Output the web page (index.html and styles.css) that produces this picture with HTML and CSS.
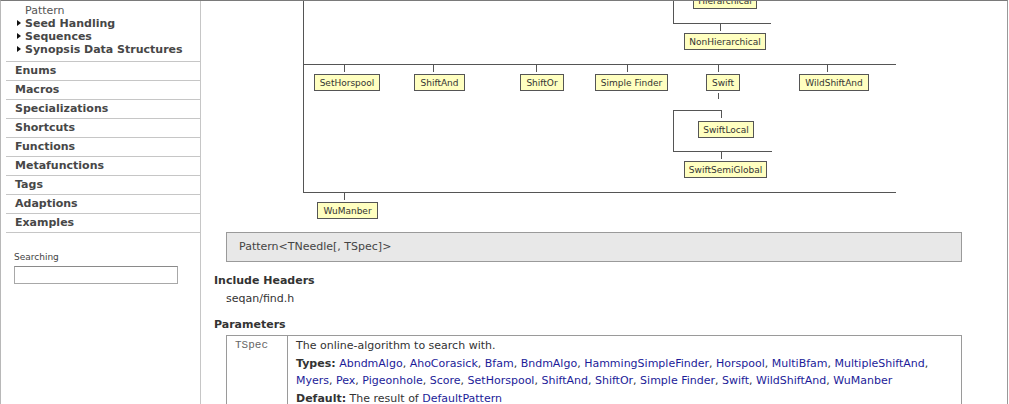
FILE: index.html
```html
<!DOCTYPE html>
<html lang="en">
<head>
<meta charset="utf-8">
<title>Pattern</title>
<link rel="stylesheet" href="styles.css">
</head>
<body>
<div class="page">
  <nav class="sidebar">
    <ul class="subnav">
      <li class="current">Pattern</li>
      <li class="folder">Seed Handling</li>
      <li class="folder">Sequences</li>
      <li class="folder">Synopsis Data Structures</li>
    </ul>
    <ul class="navlist">
      <li>Enums</li>
      <li>Macros</li>
      <li>Specializations</li>
      <li>Shortcuts</li>
      <li>Functions</li>
      <li>Metafunctions</li>
      <li>Tags</li>
      <li>Adaptions</li>
      <li>Examples</li>
    </ul>
    <div class="search">
      <label class="search-label" for="q">Searching</label>
      <input class="search-input" id="q" type="text">
    </div>
  </nav>
  <main class="main">
    <svg class="diagram" viewBox="201 1 806 222" width="806" height="222" xmlns="http://www.w3.org/2000/svg">
      <g class="edges">
        <path d="M303.5 0 V192.5"/>
        <path d="M303 64.5 H896"/>
        <path d="M303 192.5 H896"/>
        <path d="M344.5 64 V72 M433.5 64 V72 M536.5 64 V72 M627.5 64 V72 M718.5 64 V72 M827.5 64 V72"/>
        <path d="M673.5 0 V23.5 H771"/>
        <path d="M720.5 23 V31"/>
        <path d="M718.5 93 V99"/>
        <path d="M721.5 118 V110.5 H673.5 V151.5 H772"/>
        <path d="M721.5 151 V159"/>
        <path d="M344.5 192 V200"/>
      </g>
      <g class="nodes">
        <rect x="693.5" y="-7.5" width="63" height="16"/><text x="725" y="4">Hierarchical</text>
        <rect x="684.5" y="33.5" width="81" height="16"/><text x="725" y="45">NonHierarchical</text>
        <rect x="314.5" y="74.5" width="65" height="16"/><text x="347" y="86">SetHorspool</text>
        <rect x="414.5" y="74.5" width="50" height="16"/><text x="439.5" y="86">ShiftAnd</text>
        <rect x="520.5" y="74.5" width="43" height="16"/><text x="542" y="86">ShiftOr</text>
        <rect x="595.5" y="74.5" width="72" height="16"/><text x="631.5" y="86">Simple Finder</text>
        <rect x="706.5" y="74.5" width="33" height="16"/><text x="723" y="86">Swift</text>
        <rect x="799.5" y="74.5" width="69" height="16"/><text x="834" y="86">WildShiftAnd</text>
        <rect x="698.5" y="121.5" width="55" height="16"/><text x="726" y="133">SwiftLocal</text>
        <rect x="684.5" y="161.5" width="82" height="16"/><text x="725.5" y="173">SwiftSemiGlobal</text>
        <rect x="317.5" y="202.5" width="60" height="16"/><text x="347.5" y="214">WuManber</text>
      </g>
    </svg>

    <div class="signature">Pattern&lt;TNeedle[, TSpec]&gt;</div>

    <h3 class="section-title">Include Headers</h3>
    <div class="include">seqan/find.h</div>

    <h3 class="section-title section-params">Parameters</h3>
    <div class="params">
      <div class="param-name">TSpec</div>
      <div class="param-desc">
        <p>The online-algorithm to search with.</p>
        <p><b>Types:</b> <a href="#">AbndmAlgo</a>, <a href="#">AhoCorasick</a>, <a href="#">Bfam</a>, <a href="#">BndmAlgo</a>, <a href="#">HammingSimpleFinder</a>, <a href="#">Horspool</a>, <a href="#">MultiBfam</a>, <a href="#">MultipleShiftAnd</a>,<br><a href="#">Myers</a>, <a href="#">Pex</a>, <a href="#">Pigeonhole</a>, <a href="#">Score</a>, <a href="#">SetHorspool</a>, <a href="#">ShiftAnd</a>, <a href="#">ShiftOr</a>, <a href="#">Simple Finder</a>, <a href="#">Swift</a>, <a href="#">WildShiftAnd</a>, <a href="#">WuManber</a></p>
        <p><b>Default:</b> The result of <a href="#">DefaultPattern</a></p>
      </div>
    </div>
  </main>
</div>
</body>
</html>
```

FILE: styles.css
```css
html, body {
  margin: 0;
  padding: 0;
  background: #fff;
}

body {
  font-family: "DejaVu Sans", Verdana, sans-serif;
  font-size: 11px;
  color: #333;
}

.page {
  display: flex;
  width: 1008px;
  height: 404px;
  box-sizing: border-box;
  border-top: 1px solid #7a7a7a;
  border-left: 1px solid #b8b8b8;
  border-right: 1px solid #999;
  overflow: hidden;
}

/* ---------- sidebar ---------- */
.sidebar {
  flex: none;
  width: 199px;
  border-right: 1px solid #c6c6c6;
}

.subnav {
  list-style: none;
  margin: 0;
  padding: 3px 0 0 0;
  line-height: 13px;
}

.subnav li {
  padding-left: 24px;
  white-space: nowrap;
}

.subnav .current {
  color: #555;
}

.subnav .folder {
  font-weight: bold;
  color: #474747;
}

.subnav .folder::before {
  content: "";
  display: inline-block;
  margin: 0 4px 0 -8px;
  border-left: 4px solid #111;
  border-top: 3px solid transparent;
  border-bottom: 3px solid transparent;
  vertical-align: 1px;
}

.navlist {
  list-style: none;
  margin: 5px 0 0 5px;
  padding: 0;
  border-bottom: 1px solid #c6c6c6;
}

.navlist li {
  border-top: 1px solid #c6c6c6;
  height: 18px;
  line-height: 18px;
  padding-left: 9px;
  font-weight: bold;
  color: #474747;
}

.search {
  display: flex;
  flex-direction: column;
  align-items: flex-start;
  margin: 19px 0 0 13px;
}

.search-label {
  font-size: 9px;
  line-height: 11px;
  color: #444;
}

.search-input {
  margin: 3px 0 0 0;
  width: 164px;
  height: 18px;
  box-sizing: border-box;
  padding: 0 2px;
  border: 1px solid #a8a8a8;
  border-top-color: #8a8a8a;
  background: #fff;
  font: 11px "DejaVu Sans", sans-serif;
}

/* ---------- main ---------- */
.main {
  flex: 1;
  min-width: 0;
  padding: 0 45px 0 13px;
}

.diagram {
  display: block;
  margin-left: -13px;
  width: 806px;
  height: 222px;
}

.edges path {
  fill: none;
  stroke: #555;
  stroke-width: 1;
  shape-rendering: crispEdges;
}

.nodes rect {
  fill: #ffffc0;
  stroke: #555;
  stroke-width: 1;
  shape-rendering: crispEdges;
}

.nodes text {
  font-family: "DejaVu Sans", Verdana, sans-serif;
  font-size: 9px;
  fill: #333;
  text-anchor: middle;
}

.signature {
  margin: 9px 0 0 12px;
  padding: 6px 12px;
  line-height: 16px;
  background: #e8e8e8;
  border: 1px solid #9a9a9a;
  color: #444;
}

.section-title {
  margin: 12px 0 0 0;
  font-size: 11px;
  line-height: 14px;
  font-weight: bold;
  color: #333;
}

.section-params {
  margin-top: 12px;
}

.include {
  margin: 4px 0 0 12px;
  line-height: 14px;
  color: #333;
}

.params {
  display: grid;
  grid-template-columns: 61px 1fr;
  margin: 3px 0 0 12px;
  border: 1px solid #9a9a9a;
}

.param-name {
  border-right: 1px solid #9a9a9a;
  padding: 1px 0 0 8px;
  font-family: "Liberation Mono", "DejaVu Sans Mono", monospace;
  font-size: 11px;
  line-height: 17px;
  color: #666;
}

.param-desc {
  padding: 1px 0 6px 8px;
  line-height: 17px;
}

.param-desc p {
  margin: 0 0 1px 0;
  white-space: nowrap;
}

.param-desc b {
  color: #333;
}

.param-desc a {
  color: #1c1c99;
  text-decoration: none;
}
```
